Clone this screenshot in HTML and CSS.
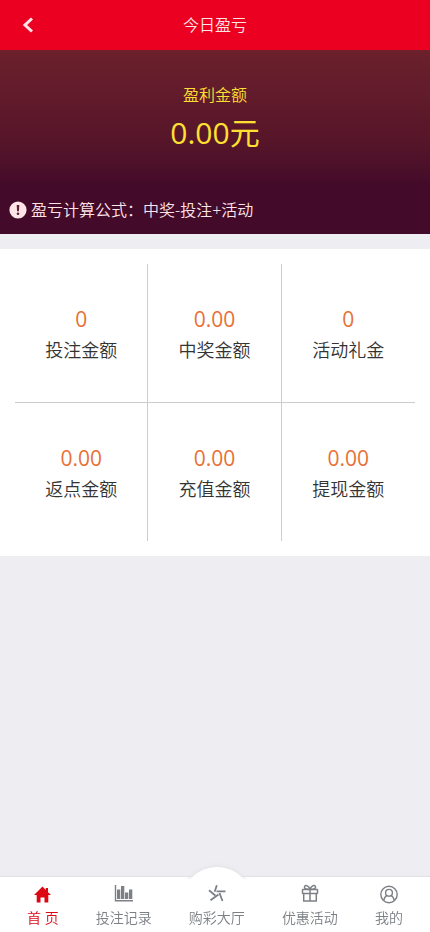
FILE: index.html
```html
<!DOCTYPE html>
<html lang="zh-CN">
<head>
<meta charset="utf-8">
<meta name="viewport" content="width=device-width, initial-scale=1">
<title>今日盈亏</title>
<link rel="stylesheet" href="styles.css">
</head>
<body>
<header class="topbar">
  <button class="back" type="button" aria-label="返回">
    <svg width="12" height="16" viewBox="0 0 12 16" fill="none" stroke="currentColor" stroke-width="3"><path d="M10 1.500 3 8l7 6.500"/></svg>
  </button>
  <h1 class="title">今日盈亏</h1>
</header>
<main class="content">
  <section class="hero">
    <div class="profit">
      <h2 class="profit-label">盈利金额</h2>
      <p class="profit-value">0.00元</p>
    </div>
    <p class="formula">
      <svg width="18" height="18" viewBox="0 0 18 18"><circle cx="9" cy="9" r="8.600" fill="#ffe4e8"/><path d="M7.700 4h2.600l-.4 6.200H8.100z" fill="#5d2038"/><circle cx="9" cy="12.700" r="1.300" fill="#5d2038"/></svg>
      <span>盈亏计算公式：中奖-投注+活动</span>
    </p>
  </section>
  <section class="panel">
    <dl class="stats">
      <div class="stat"><dt>投注金额</dt><dd>0</dd></div>
      <div class="stat"><dt>中奖金额</dt><dd>0.00</dd></div>
      <div class="stat"><dt>活动礼金</dt><dd>0</dd></div>
      <div class="stat"><dt>返点金额</dt><dd>0.00</dd></div>
      <div class="stat"><dt>充值金额</dt><dd>0.00</dd></div>
      <div class="stat"><dt>提现金额</dt><dd>0.00</dd></div>
    </dl>
  </section>
</main>
<nav class="tabbar">
  <a class="tab active" href="#home">
    <svg width="20" height="20" viewBox="0 0 20 20" fill="currentColor"><path d="M9.500 2.500 1 11h2.700v7.500h3.800v-5h4v5h3.800V11H18L15 8.200V4h-2.200v2z"/></svg>
    <span>首 页</span>
  </a>
  <a class="tab" href="#records">
    <svg width="20" height="20" viewBox="0 0 20 20" fill="currentColor"><path d="M.8 1h1.400v15H19v1.500H.8zM3 5.500h3.300V15H3zM7 2h3.300v13H7zM11 8.500h3.300V15H11zM15 5.500h3.300V15H15z"/></svg>
    <span>投注记录</span>
  </a>
  <a class="tab hall" href="#hall">
    <svg width="20" height="20" viewBox="0 0 20 20" fill="none" stroke="currentColor" stroke-width="1.800"><path d="M9.800 1.200 7.700 7.800M18.500 7.300H9.500M12.500 9l3 8M2 6.300 8.300 11.500M11.500 10.500 3.500 16.300"/></svg>
    <span>购彩大厅</span>
  </a>
  <a class="tab" href="#offers">
    <svg width="20" height="20" viewBox="0 0 20 20" fill="none" stroke="currentColor" stroke-width="1.500"><rect x="2.500" y="5.500" width="15" height="4" rx=".5"/><path d="M3.700 9.500V17h12.600V9.500M10 5.500V17M10 5.500C5 5.500 4 4 4.600 2.500 5.500.5 9 1.700 10 5.500ZM10 5.500c5 0 6-1.500 5.400-3C14.500.5 11 1.700 10 5.500Z"/></svg>
    <span>优惠活动</span>
  </a>
  <a class="tab" href="#me">
    <svg width="20" height="20" viewBox="0 0 20 20" fill="none" stroke="currentColor" stroke-width="1.400"><circle cx="10" cy="10.500" r="8.200"/><circle cx="10" cy="8.800" r="3.400"/><path d="M4.800 16.500c.3-3 1.700-4.500 3.500-5.200M15.200 16.500c-.3-3-1.700-4.500-3.500-5.200"/></svg>
    <span>我的</span>
  </a>
</nav>
</body>
</html>
```
FILE: styles.css
```css
* {
  box-sizing: border-box;
}

body {
  margin: 0;
  min-height: 100vh;
  display: flex;
  flex-direction: column;
  background: #eeedf2;
  color: #333;
  font-family: "Noto Sans", "Noto Sans CJK SC", sans-serif;
  font-size: 16px;
  font-weight: 350;
}

h1, h2, p, dl, dd {
  margin: 0;
  font-weight: inherit;
}

svg {
  display: block;
  flex: none;
}

.topbar {
  display: grid;
  grid-template-columns: 56px 1fr 56px;
  align-items: center;
  height: 50px;
  background: #ec0022;
  color: #ffe4e8;
}

.back {
  display: flex;
  justify-content: center;
  align-items: center;
  height: 50px;
  padding: 0;
  border: 0;
  background: none;
  color: inherit;
}

.title {
  font-size: 16px;
  line-height: 24px;
  text-align: center;
}

.content {
  flex: 1;
}

.hero {
  display: flex;
  flex-direction: column;
  justify-content: space-between;
  height: 184px;
  padding: 33px 9px 12px;
  background: linear-gradient(#6c212c, #561529 50%, #4c1029 63%, #430a29 74%);
}

.profit {
  color: #ffe032;
  text-align: center;
}

.profit-label {
  font-size: 16px;
  line-height: 24px;
}

.profit-value {
  font-family: "Open Sans", "Noto Sans CJK SC", sans-serif;
  font-size: 30px;
  font-weight: 400;
  line-height: 52px;
}

.formula {
  display: flex;
  align-items: center;
  gap: 4px;
  color: #ffe4e8;
  line-height: 24px;
}

.panel {
  margin-top: 15px;
  padding: 15px;
  background: #fff;
}

.stats {
  display: grid;
  grid-template-columns: repeat(3, 1fr);
  grid-template-rows: 139px 138px;
}

.stat {
  display: flex;
  flex-direction: column-reverse;
  justify-content: center;
  padding-top: 1px;
  border-right: 1px solid #ccc;
  border-bottom: 1px solid #ccc;
  text-align: center;
}

.stat:nth-child(3n) {
  border-right: 0;
}

.stat:nth-child(n + 4) {
  border-bottom: 0;
}

.stat dt {
  font-size: 18px;
  line-height: 30px;
}

.stat dd {
  color: #e77136;
  font-family: "Open Sans", sans-serif;
  font-size: 21px;
  font-weight: 400;
  line-height: 32px;
}

.tabbar {
  position: sticky;
  bottom: 0;
  display: flex;
  justify-content: space-between;
  height: 55px;
  padding: 7px 27px 0;
  background: #fff;
  box-shadow: 0 -1px 1px #e2e2e6;
}

.tab {
  position: relative;
  display: flex;
  flex-direction: column;
  align-items: center;
  gap: 4px;
  color: #7c8085;
  font-size: 14px;
  line-height: 20px;
  text-decoration: none;
}

.active {
  color: #dc0814;
}

/* White dome that lifts the centre tab above the bar */
.hall::before {
  content: "";
  position: absolute;
  top: -17px;
  left: 50%;
  width: 72px;
  height: 72px;
  margin-left: -36px;
  border-radius: 50%;
  background: #fff;
  box-shadow: 0 -1px 4px #e2e2e6;
  clip-path: inset(-5px -4px 60px -4px);
}

.hall svg,
.hall span {
  position: relative;
}
```
